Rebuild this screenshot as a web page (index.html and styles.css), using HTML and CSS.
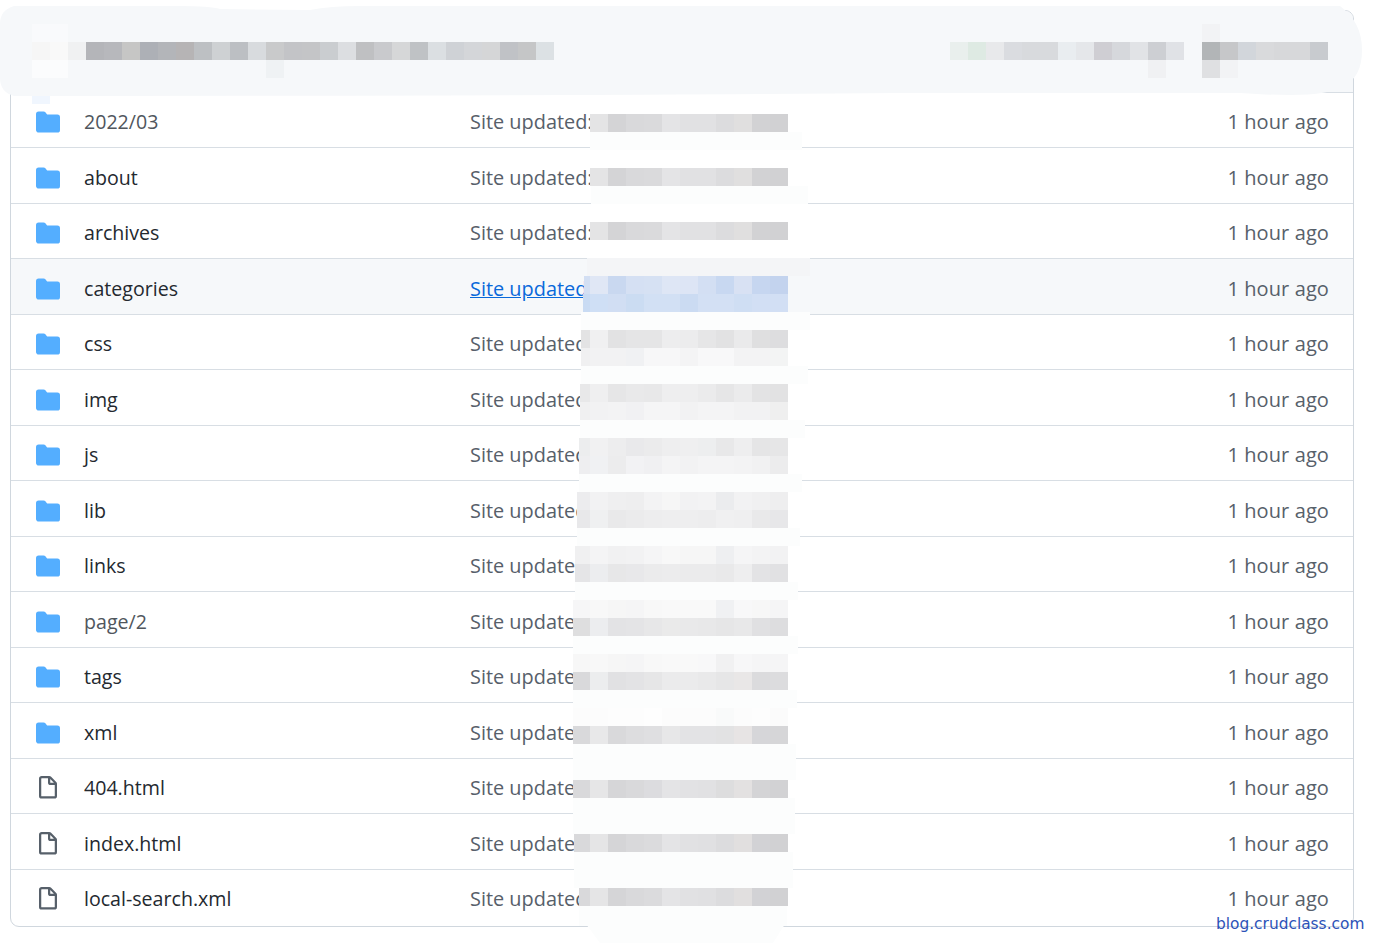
FILE: index.html
```html
<!DOCTYPE html>
<html lang="en">
<head>
<meta charset="utf-8">
<title>Repository files</title>
<link rel="stylesheet" href="styles.css">
</head>
<body>
<svg width="0" height="0" class="defs">
  <symbol id="folder" viewBox="0 0 16 16"><path d="M1.75 1A1.75 1.75 0 000 2.75v10.5C0 14.216.784 15 1.75 15h12.5A1.75 1.75 0 0016 13.25v-8.5A1.75 1.75 0 0014.25 3H7.5a.25.25 0 01-.2-.1l-.9-1.2C6.07 1.26 5.55 1 5 1H1.75z"/></symbol>
  <symbol id="file" viewBox="0 0 16 16"><path fill-rule="evenodd" d="M3.75 1.5a.25.25 0 00-.25.25v11.5c0 .138.112.25.25.25h8.5a.25.25 0 00.25-.25V6H9.75A1.75 1.75 0 018 4.25V1.5H3.75zm5.75.56v2.19c0 .138.112.25.25.25h2.19L9.5 2.06zM2 1.75C2 .784 2.784 0 3.75 0h5.086c.464 0 .909.184 1.237.513l3.414 3.414c.329.328.513.773.513 1.237v8.086A1.75 1.75 0 0112.25 15h-8.5A1.75 1.75 0 012 13.25V1.75z"/></symbol>
</svg>
<main class="box">
  <div class="box-head"></div>
  <div class="row"><svg class="icon dir"><use href="#folder"/></svg><a class="name soft">2022/03</a><a class="msg">Site updated:</a><span class="age">1 hour ago</span></div>
  <div class="row"><svg class="icon dir"><use href="#folder"/></svg><a class="name">about</a><a class="msg">Site updated:</a><span class="age">1 hour ago</span></div>
  <div class="row"><svg class="icon dir"><use href="#folder"/></svg><a class="name">archives</a><a class="msg">Site updated:</a><span class="age">1 hour ago</span></div>
  <div class="row hover"><svg class="icon dir"><use href="#folder"/></svg><a class="name">categories</a><a class="msg">Site updated:</a><span class="age">1 hour ago</span></div>
  <div class="row"><svg class="icon dir"><use href="#folder"/></svg><a class="name">css</a><a class="msg">Site updated:</a><span class="age">1 hour ago</span></div>
  <div class="row"><svg class="icon dir"><use href="#folder"/></svg><a class="name">img</a><a class="msg">Site updated:</a><span class="age">1 hour ago</span></div>
  <div class="row"><svg class="icon dir"><use href="#folder"/></svg><a class="name">js</a><a class="msg">Site updated:</a><span class="age">1 hour ago</span></div>
  <div class="row"><svg class="icon dir"><use href="#folder"/></svg><a class="name">lib</a><a class="msg">Site updated:</a><span class="age">1 hour ago</span></div>
  <div class="row"><svg class="icon dir"><use href="#folder"/></svg><a class="name">links</a><a class="msg">Site updated:</a><span class="age">1 hour ago</span></div>
  <div class="row"><svg class="icon dir"><use href="#folder"/></svg><a class="name soft">page/2</a><a class="msg">Site updated:</a><span class="age">1 hour ago</span></div>
  <div class="row"><svg class="icon dir"><use href="#folder"/></svg><a class="name">tags</a><a class="msg">Site updated:</a><span class="age">1 hour ago</span></div>
  <div class="row"><svg class="icon dir"><use href="#folder"/></svg><a class="name">xml</a><a class="msg">Site updated:</a><span class="age">1 hour ago</span></div>
  <div class="row"><svg class="icon doc"><use href="#file"/></svg><a class="name">404.html</a><a class="msg">Site updated:</a><span class="age">1 hour ago</span></div>
  <div class="row"><svg class="icon doc"><use href="#file"/></svg><a class="name">index.html</a><a class="msg">Site updated:</a><span class="age">1 hour ago</span></div>
  <div class="row last"><svg class="icon doc"><use href="#file"/></svg><a class="name">local-search.xml</a><a class="msg">Site updated:</a><span class="age">1 hour ago</span></div>
</main>

<svg class="redaction" width="1374" height="943" viewBox="0 0 1374 943" aria-hidden="true">
  <path fill="#f6f8fa" d="M14 6H180Q210 6 220 9L310 10Q330 6 360 6H1340Q1362 22 1362 50Q1362 78 1343 86Q1330 95 1290 95Q1270 95 1240 93H900Q600 96 14 96Q0 92 0 78V24Q0 10 14 6Z"/>
  <g class="cells">
    <rect x="32" y="24" fill="#f9fafc"/><rect x="50" y="24" fill="#f9fafc"/>
    <rect x="32" y="60" fill="#fbfcfd"/><rect x="50" y="60" fill="#fbfcfd"/><rect x="266" y="60" fill="#eff2f4"/>
    <rect x="32" y="42" fill="#f6f6f6"/><rect x="50" y="42" fill="#f9f9f9"/><rect x="68" y="42" fill="#f0f1f2"/><rect x="86" y="42" fill="#b4b5b9"/><rect x="104" y="42" fill="#b7b8bc"/><rect x="122" y="42" fill="#c6c6c5"/><rect x="140" y="42" fill="#adb0b6"/><rect x="158" y="42" fill="#b3b5b9"/><rect x="176" y="42" fill="#b6b4b5"/><rect x="194" y="42" fill="#bdc0c3"/><rect x="212" y="42" fill="#ced1d3"/><rect x="230" y="42" fill="#bcbfc3"/><rect x="248" y="42" fill="#d8dbde"/><rect x="266" y="42" fill="#c9cacb"/><rect x="284" y="42" fill="#c3c4c7"/><rect x="302" y="42" fill="#c4c5c7"/><rect x="320" y="42" fill="#cacdd0"/><rect x="338" y="42" fill="#dcdee1"/><rect x="356" y="42" fill="#bfc0c2"/><rect x="374" y="42" fill="#c9cacd"/><rect x="392" y="42" fill="#d6d7d8"/><rect x="410" y="42" fill="#bfc2c5"/><rect x="428" y="42" fill="#dbdfe2"/><rect x="446" y="42" fill="#cfd2d6"/><rect x="464" y="42" fill="#d4d6d9"/><rect x="482" y="42" fill="#d5d6d7"/><rect x="500" y="42" fill="#c0c2c6"/><rect x="518" y="42" fill="#c5c6c7"/><rect x="536" y="42" fill="#dce1e4"/>
    <rect x="950" y="42" fill="#e9efed"/><rect x="968" y="42" fill="#deeae3"/><rect x="986" y="42" fill="#e8e9eb"/><rect x="1004" y="42" fill="#dadce0"/><rect x="1022" y="42" fill="#d8dadd"/><rect x="1040" y="42" fill="#d8dadd"/><rect x="1058" y="42" fill="#e9edf0"/><rect x="1076" y="42" fill="#e5e7ea"/><rect x="1094" y="42" fill="#cfced3"/><rect x="1112" y="42" fill="#d6d8dc"/><rect x="1130" y="42" fill="#e1e3e6"/><rect x="1148" y="42" fill="#cdcfd3"/><rect x="1166" y="42" fill="#e0e2e6"/>
    <rect x="1148" y="60" fill="#f0f1f3"/>
    <rect x="1202" y="24" fill="#f2f3f5"/><rect x="1202" y="42" fill="#b2b5b7"/><rect x="1220" y="42" fill="#c6c7c9"/><rect x="1238" y="42" fill="#d2d6db"/><rect x="1256" y="42" fill="#d9dadc"/><rect x="1274" y="42" fill="#d7d8da"/><rect x="1292" y="42" fill="#d7d8da"/><rect x="1310" y="42" fill="#c8cbcf"/>
    <rect x="1202" y="60" fill="#dfe0e2"/><rect x="1220" y="60" fill="#f2f3f5"/>
  </g>
  <rect x="32" y="96" width="18" height="8" fill="#f0f6fe"/>

  <g fill="#fcfdfd">
    <rect x="590" y="132" width="212" height="18"/>
    <rect x="591" y="186" width="217" height="18"/>
    <rect x="590" y="240" width="220" height="18" fill="#ffffff"/>
    <rect x="587" y="258" width="223" height="18" fill="#f4f5f7"/>
    <rect x="581" y="312" width="229" height="18"/>
    <rect x="581" y="366" width="227" height="18"/>
    <rect x="580" y="420" width="225" height="18"/>
    <rect x="579" y="474" width="223" height="18"/>
    <rect x="577" y="528" width="223" height="18"/>
    <rect x="575" y="582" width="223" height="18"/>
    <rect x="573" y="636" width="225" height="18"/>
    <rect x="573" y="690" width="224" height="18"/>
    <rect x="573" y="744" width="223" height="36"/>
    <rect x="573" y="798" width="222" height="36"/>
    <rect x="574" y="852" width="219" height="36"/>
    <rect x="579" y="906" width="208" height="20"/>
    <polygon points="586,924 785,924 773,943 600,943"/>
  </g>

  <g class="cells">
    <rect x="590" y="114" fill="#e4e4e5"/><rect x="608" y="114" fill="#d4d4d6"/><rect x="626" y="114" fill="#d9d9db"/><rect x="644" y="114" fill="#dadadc"/><rect x="662" y="114" fill="#e4e4e6"/><rect x="680" y="114" fill="#e1e1e3"/><rect x="698" y="114" fill="#e1e1e3"/><rect x="716" y="114" fill="#dcdcde"/><rect x="734" y="114" fill="#e0dfdf"/><rect x="752" y="114" fill="#d2d2d4"/><rect x="770" y="114" fill="#d1d1d3"/>
    <rect x="590" y="168" fill="#e4e4e5"/><rect x="608" y="168" fill="#d4d4d6"/><rect x="626" y="168" fill="#d9d9db"/><rect x="644" y="168" fill="#dadadc"/><rect x="662" y="168" fill="#e4e4e6"/><rect x="680" y="168" fill="#e1e1e3"/><rect x="698" y="168" fill="#e1e1e3"/><rect x="716" y="168" fill="#dcdcde"/><rect x="734" y="168" fill="#e0dfdf"/><rect x="752" y="168" fill="#d2d2d4"/><rect x="770" y="168" fill="#d1d1d3"/>
    <rect x="590" y="222" fill="#e4e4e5"/><rect x="608" y="222" fill="#d4d4d6"/><rect x="626" y="222" fill="#d9d9db"/><rect x="644" y="222" fill="#dadadc"/><rect x="662" y="222" fill="#e4e4e6"/><rect x="680" y="222" fill="#e1e1e3"/><rect x="698" y="222" fill="#e1e1e3"/><rect x="716" y="222" fill="#dcdcde"/><rect x="734" y="222" fill="#e0dfdf"/><rect x="752" y="222" fill="#d2d2d4"/><rect x="770" y="222" fill="#d1d1d3"/>

    <rect x="584" y="276" fill="#d3dff3" class="w6"/><rect x="590" y="276" fill="#e0e7f5"/><rect x="608" y="276" fill="#c9d8f0"/><rect x="626" y="276" fill="#d5e0f3"/><rect x="644" y="276" fill="#d6e1f3"/><rect x="662" y="276" fill="#dee6f5"/><rect x="680" y="276" fill="#dde5f5"/><rect x="698" y="276" fill="#d3dff3"/><rect x="716" y="276" fill="#c8d8f1"/><rect x="734" y="276" fill="#d8e1f3"/><rect x="752" y="276" fill="#c6d6f0"/><rect x="770" y="276" fill="#c3d3ee"/>
    <rect x="583" y="294" fill="#c9dbf3" class="w7"/><rect x="590" y="294" fill="#cfdff5"/><rect x="608" y="294" fill="#d1def3"/><rect x="626" y="294" fill="#cbdcf2"/><rect x="644" y="294" fill="#d2e0f4"/><rect x="662" y="294" fill="#d2e0f4"/><rect x="680" y="294" fill="#cbdbf2"/><rect x="698" y="294" fill="#d3e0f4"/><rect x="716" y="294" fill="#d3e0f4"/><rect x="734" y="294" fill="#cfdef3"/><rect x="752" y="294" fill="#d2dff4"/><rect x="770" y="294" fill="#d2dff4"/>

    <rect x="581" y="330" fill="#e3e3e4" class="w9"/><rect x="590" y="330" fill="#f0f0f1"/><rect x="608" y="330" fill="#e2e2e3"/><rect x="626" y="330" fill="#e5e5e6"/><rect x="644" y="330" fill="#e5e5e6"/><rect x="662" y="330" fill="#ededee"/><rect x="680" y="330" fill="#ececed"/><rect x="698" y="330" fill="#e6e6e7"/><rect x="716" y="330" fill="#e2e2e3"/><rect x="734" y="330" fill="#eaeaeb"/><rect x="752" y="330" fill="#dfdfe0"/><rect x="770" y="330" fill="#dddddf"/>
    <rect x="581" y="348" fill="#f0f0f1" class="w9"/><rect x="590" y="348" fill="#f2f2f3"/><rect x="608" y="348" fill="#f2f2f3"/><rect x="626" y="348" fill="#f0f1f3"/><rect x="644" y="348" fill="#f7f7f8"/><rect x="662" y="348" fill="#f7f7f8"/><rect x="680" y="348" fill="#f4f4f5"/><rect x="698" y="348" fill="#f8f8f9"/><rect x="716" y="348" fill="#f8f8f9"/><rect x="734" y="348" fill="#f3f3f4"/><rect x="752" y="348" fill="#f3f3f4"/><rect x="770" y="348" fill="#f3f4f4"/>

    <rect x="580" y="384" fill="#e8e8e9" class="w10"/><rect x="590" y="384" fill="#efeff0"/><rect x="608" y="384" fill="#e6e6e7"/><rect x="626" y="384" fill="#e9e9ea"/><rect x="644" y="384" fill="#e8e8e9"/><rect x="662" y="384" fill="#eeeeef"/><rect x="680" y="384" fill="#eeeeef"/><rect x="698" y="384" fill="#ebebec"/><rect x="716" y="384" fill="#e6e6e7"/><rect x="734" y="384" fill="#ebebec"/><rect x="752" y="384" fill="#e3e3e4"/><rect x="770" y="384" fill="#e2e2e3"/>
    <rect x="580" y="402" fill="#f0f0f1" class="w10"/><rect x="590" y="402" fill="#f2f2f3"/><rect x="608" y="402" fill="#f3f3f4"/><rect x="626" y="402" fill="#f1f1f3"/><rect x="644" y="402" fill="#f5f5f6"/><rect x="662" y="402" fill="#f5f5f6"/><rect x="680" y="402" fill="#f2f2f3"/><rect x="698" y="402" fill="#f4f4f5"/><rect x="716" y="402" fill="#f4f4f5"/><rect x="734" y="402" fill="#f2f2f3"/><rect x="752" y="402" fill="#f2f2f3"/><rect x="770" y="402" fill="#efefef"/>

    <rect x="579" y="438" fill="#ecedee" class="w11"/><rect x="590" y="438" fill="#f1f1f2"/><rect x="608" y="438" fill="#ededee"/><rect x="626" y="438" fill="#e9e9eb"/><rect x="644" y="438" fill="#ebebec"/><rect x="662" y="438" fill="#eeeeef"/><rect x="680" y="438" fill="#efeff0"/><rect x="698" y="438" fill="#edeeef"/><rect x="716" y="438" fill="#e8e8e9"/><rect x="734" y="438" fill="#eeeeef"/><rect x="752" y="438" fill="#e5e5e6"/><rect x="770" y="438" fill="#e6e6e7"/>
    <rect x="579" y="456" fill="#eeeef0" class="w11"/><rect x="590" y="456" fill="#f0f1f3"/><rect x="608" y="456" fill="#ececed"/><rect x="626" y="456" fill="#f2f2f4"/><rect x="644" y="456" fill="#f0f0f2"/><rect x="662" y="456" fill="#f4f4f5"/><rect x="680" y="456" fill="#f2f2f3"/><rect x="698" y="456" fill="#f4f4f5"/><rect x="716" y="456" fill="#f4f4f5"/><rect x="734" y="456" fill="#f3f3f4"/><rect x="752" y="456" fill="#f1f1f2"/><rect x="770" y="456" fill="#ececed"/>

    <rect x="577" y="492" fill="#ececee" class="w13"/><rect x="590" y="492" fill="#f2f2f3"/><rect x="608" y="492" fill="#efeff0"/><rect x="626" y="492" fill="#eeeeef"/><rect x="644" y="492" fill="#f3f3f4"/><rect x="662" y="492" fill="#f6f6f6"/><rect x="680" y="492" fill="#f2f2f3"/><rect x="698" y="492" fill="#f3f3f4"/><rect x="716" y="492" fill="#ebecee"/><rect x="734" y="492" fill="#f2f2f3"/><rect x="752" y="492" fill="#f0f0f1"/><rect x="770" y="492" fill="#eeeeef"/>
    <rect x="577" y="510" fill="#e8e8ea" class="w13"/><rect x="590" y="510" fill="#eff0f1"/><rect x="608" y="510" fill="#e9e9ea"/><rect x="626" y="510" fill="#ebebec"/><rect x="644" y="510" fill="#ededee"/><rect x="662" y="510" fill="#eeeeef"/><rect x="680" y="510" fill="#eeeeef"/><rect x="698" y="510" fill="#ededee"/><rect x="716" y="510" fill="#f0f0f1"/><rect x="734" y="510" fill="#efeff0"/><rect x="752" y="510" fill="#e9e9ea"/><rect x="770" y="510" fill="#e7e7e9"/>

    <rect x="575" y="546" fill="#f0f0f1" class="w15"/><rect x="590" y="546" fill="#f4f4f5"/><rect x="608" y="546" fill="#f1f1f2"/><rect x="626" y="546" fill="#f2f2f3"/><rect x="644" y="546" fill="#f5f5f6"/><rect x="662" y="546" fill="#f8f8f8"/><rect x="680" y="546" fill="#f6f6f6"/><rect x="698" y="546" fill="#f6f6f6"/><rect x="716" y="546" fill="#eeeff1"/><rect x="734" y="546" fill="#f5f5f6"/><rect x="752" y="546" fill="#f3f3f4"/><rect x="770" y="546" fill="#f2f2f3"/>
    <rect x="575" y="564" fill="#e5e5e7" class="w15"/><rect x="590" y="564" fill="#ecedef"/><rect x="608" y="564" fill="#e7e7e8"/><rect x="626" y="564" fill="#e8e8ea"/><rect x="644" y="564" fill="#ebebec"/><rect x="662" y="564" fill="#ececed"/><rect x="680" y="564" fill="#ebebec"/><rect x="698" y="564" fill="#ebebec"/><rect x="716" y="564" fill="#e9e9ea"/><rect x="734" y="564" fill="#eeeeef"/><rect x="752" y="564" fill="#e3e3e5"/><rect x="770" y="564" fill="#e1e1e3"/>

    <rect x="573" y="600" fill="#f6f6f7" class="w17"/><rect x="590" y="600" fill="#f8f8f8"/><rect x="608" y="600" fill="#f6f6f6"/><rect x="626" y="600" fill="#f5f5f6"/><rect x="644" y="600" fill="#f8f8f8"/><rect x="662" y="600" fill="#f9f9f9"/><rect x="680" y="600" fill="#f9f9f9"/><rect x="698" y="600" fill="#f9f9f9"/><rect x="716" y="600" fill="#f0f1f3"/><rect x="734" y="600" fill="#f8f8f9"/><rect x="752" y="600" fill="#f7f7f7"/><rect x="770" y="600" fill="#f5f5f6"/>
    <rect x="573" y="618" fill="#dededf" class="w17"/><rect x="590" y="618" fill="#ecedef"/><rect x="608" y="618" fill="#e3e3e5"/><rect x="626" y="618" fill="#e4e4e6"/><rect x="644" y="618" fill="#e7e7e8"/><rect x="662" y="618" fill="#eaeaea"/><rect x="680" y="618" fill="#e9e9ea"/><rect x="698" y="618" fill="#e8e8e9"/><rect x="716" y="618" fill="#e6e6e7"/><rect x="734" y="618" fill="#e8e8e9"/><rect x="752" y="618" fill="#e0e0e2"/><rect x="770" y="618" fill="#dddddf"/>

    <rect x="573" y="654" fill="#f7f7f7" class="w17"/><rect x="590" y="654" fill="#f8f8f8"/><rect x="608" y="654" fill="#f6f6f6"/><rect x="626" y="654" fill="#f5f5f6"/><rect x="644" y="654" fill="#f8f8f8"/><rect x="662" y="654" fill="#f9f9f9"/><rect x="680" y="654" fill="#f9f9f9"/><rect x="698" y="654" fill="#f8f8f9"/><rect x="716" y="654" fill="#f1f1f2"/><rect x="734" y="654" fill="#f7f7f8"/><rect x="752" y="654" fill="#f5f5f6"/><rect x="770" y="654" fill="#f5f5f6"/>
    <rect x="573" y="672" fill="#d9d9db" class="w17"/><rect x="590" y="672" fill="#ecedee"/><rect x="608" y="672" fill="#e1e1e3"/><rect x="626" y="672" fill="#e3e3e5"/><rect x="644" y="672" fill="#e6e6e7"/><rect x="662" y="672" fill="#ebebec"/><rect x="680" y="672" fill="#ebebec"/><rect x="698" y="672" fill="#e9e9ea"/><rect x="716" y="672" fill="#e6e6e7"/><rect x="734" y="672" fill="#e9e7e7"/><rect x="752" y="672" fill="#dbdbdd"/><rect x="770" y="672" fill="#dcdcde"/>

    <rect x="573" y="708" fill="#fcfcfc" class="w17"/><rect x="590" y="708" fill="#fcfcfc"/><rect x="608" y="708" fill="#fdfdfd"/><rect x="626" y="708" fill="#fdfdfd"/><rect x="644" y="708" fill="#fefefe"/><rect x="662" y="708" fill="#fcfcfc"/><rect x="680" y="708" fill="#fcfcfc"/><rect x="698" y="708" fill="#fcfcfc"/><rect x="716" y="708" fill="#f9fafa"/><rect x="734" y="708" fill="#fcfcfc"/><rect x="752" y="708" fill="#fdfdfd"/><rect x="770" y="708" fill="#fbfbfb"/>
    <rect x="573" y="726" fill="#d9d9db" class="w17"/><rect x="590" y="726" fill="#e8e8e9"/><rect x="608" y="726" fill="#d9d9db"/><rect x="626" y="726" fill="#dddddf"/><rect x="644" y="726" fill="#dfdfe1"/><rect x="662" y="726" fill="#e7e7e8"/><rect x="680" y="726" fill="#e3e3e5"/><rect x="698" y="726" fill="#e3e3e5"/><rect x="716" y="726" fill="#e2e2e3"/><rect x="734" y="726" fill="#e7e4e4"/><rect x="752" y="726" fill="#d6d6d9"/><rect x="770" y="726" fill="#d6d6d8"/>

    <rect x="573" y="780" fill="#d9d9db" class="w17"/><rect x="590" y="780" fill="#e6e6e7"/><rect x="608" y="780" fill="#d6d6d8"/><rect x="626" y="780" fill="#d9d9db"/><rect x="644" y="780" fill="#dcdcdf"/><rect x="662" y="780" fill="#e4e4e6"/><rect x="680" y="780" fill="#e2e2e4"/><rect x="698" y="780" fill="#e1e1e3"/><rect x="716" y="780" fill="#ddddde"/><rect x="734" y="780" fill="#e3e1e1"/><rect x="752" y="780" fill="#d4d4d6"/><rect x="770" y="780" fill="#d2d2d4"/>
    <rect x="574" y="834" fill="#d9d9db" class="w16"/><rect x="590" y="834" fill="#e5e5e6"/><rect x="608" y="834" fill="#d5d5d7"/><rect x="626" y="834" fill="#d9d9db"/><rect x="644" y="834" fill="#dbdbdd"/><rect x="662" y="834" fill="#e4e4e6"/><rect x="680" y="834" fill="#e1e1e3"/><rect x="698" y="834" fill="#e0e0e2"/><rect x="716" y="834" fill="#dcdcde"/><rect x="734" y="834" fill="#e1dfdf"/><rect x="752" y="834" fill="#d2d2d5"/><rect x="770" y="834" fill="#d1d1d3"/>
    <rect x="579" y="888" fill="#d9d9db" class="w11"/><rect x="590" y="888" fill="#e5e5e6"/><rect x="608" y="888" fill="#d5d5d7"/><rect x="626" y="888" fill="#d9d9db"/><rect x="644" y="888" fill="#dbdbdd"/><rect x="662" y="888" fill="#e4e4e6"/><rect x="680" y="888" fill="#e1e1e3"/><rect x="698" y="888" fill="#e0e0e2"/><rect x="716" y="888" fill="#dcdcde"/><rect x="734" y="888" fill="#e1dfdf"/><rect x="752" y="888" fill="#d2d2d5"/><rect x="770" y="888" fill="#d1d1d3"/>
  </g>
</svg>
<div class="watermark">blog.crudclass.com</div>
</body>
</html>
```
FILE: styles.css
```css
html, body {
  margin: 0;
  padding: 0;
  background: #ffffff;
}
body {
  position: relative;
  width: 1374px;
  height: 943px;
  overflow: hidden;
  font-family: "Open Sans", "Noto Sans", sans-serif;
  font-size: 19.6px;
}
.defs {
  position: absolute;
}
.box {
  margin: 10px 20px 0 10px;
  border: 1px solid #d0d7de;
  border-radius: 9px;
  box-sizing: border-box;
  height: 917px;
  overflow: hidden;
}
.box-head {
  height: 80.9px;
  background: #f6f8fa;
}
.row {
  display: grid;
  grid-template-columns: 48px 386px 1fr auto;
  align-items: center;
  box-sizing: border-box;
  height: 55.5px;
  padding: 4px 24px 0 25px;
  border-top: 1px solid #d8dee4;
  line-height: 28px;
}
.row.last {
  height: 57px;
  padding-bottom: 2px;
}
.row.hover {
  background: #f6f8fa;
}
.icon {
  width: 24px;
  height: 24px;
  display: block;
}
.dir {
  fill: #54aeff;
}
.doc {
  fill: #57606a;
}
.name {
  color: #24292f;
}
.name.soft {
  color: #50565d;
}
.msg {
  color: #57606a;
  font-size: 19.9px;
  white-space: nowrap;
}
.hover .msg {
  color: #0969da;
  text-decoration: underline;
}
.age {
  color: #57606a;
  font-size: 20px;
  letter-spacing: 0.1px;
}
.redaction {
  position: absolute;
  left: 0;
  top: 0;
}
.cells rect {
  width: 18px;
  height: 18px;
}
.cells rect.w6 { width: 6px; }
.cells rect.w7 { width: 7px; }
.cells rect.w9 { width: 9px; }
.cells rect.w10 { width: 10px; }
.cells rect.w11 { width: 11px; }
.cells rect.w13 { width: 13px; }
.cells rect.w15 { width: 15px; }
.cells rect.w16 { width: 16px; }
.cells rect.w17 { width: 17px; }
.watermark {
  position: absolute;
  left: 1216px;
  top: 913px;
  color: #2c52b8;
  font-family: "DejaVu Sans", sans-serif;
  font-size: 15.4px;
  line-height: 22px;
  white-space: nowrap;
}
```
